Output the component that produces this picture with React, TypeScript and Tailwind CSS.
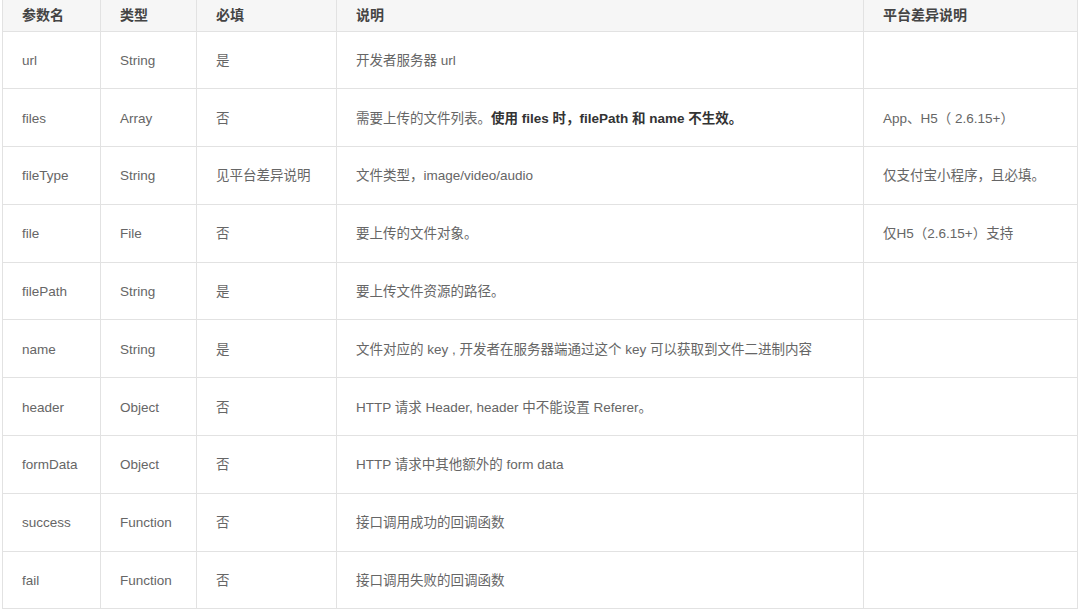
import React from "react";

type Row = {
  name: string;
  type: string;
  req: string;
  desc: React.ReactNode;
  plat?: string;
};

const rows: Row[] = [
  { name: "url", type: "String", req: "是", desc: "开发者服务器 url" },
  {
    name: "files",
    type: "Array",
    req: "否",
    desc: (
      <>
        需要上传的文件列表。
        <b className="font-bold text-[#333]">使用 files 时，filePath 和 name 不生效。</b>
      </>
    ),
    plat: "App、H5（ 2.6.15+）",
  },
  {
    name: "fileType",
    type: "String",
    req: "见平台差异说明",
    desc: "文件类型，image/video/audio",
    plat: "仅支付宝小程序，且必填。",
  },
  { name: "file", type: "File", req: "否", desc: "要上传的文件对象。", plat: "仅H5（2.6.15+）支持" },
  { name: "filePath", type: "String", req: "是", desc: "要上传文件资源的路径。" },
  {
    name: "name",
    type: "String",
    req: "是",
    desc: "文件对应的 key , 开发者在服务器端通过这个 key 可以获取到文件二进制内容",
  },
  { name: "header", type: "Object", req: "否", desc: "HTTP 请求 Header, header 中不能设置 Referer。" },
  { name: "formData", type: "Object", req: "否", desc: "HTTP 请求中其他额外的 form data" },
  { name: "success", type: "Function", req: "否", desc: "接口调用成功的回调函数" },
  { name: "fail", type: "Function", req: "否", desc: "接口调用失败的回调函数" },
];

export default function App() {
  return (
    <div
      className="w-[1080px] h-[611px] overflow-hidden bg-white pl-[2px]"
      style={{ fontFamily: '"Liberation Sans", "Noto Sans CJK SC", sans-serif' }}
    >
      <table className="table-fixed border-collapse w-[1075px] text-[13.5px] text-[#666]">
        <colgroup>
          <col className="w-[98px]" />
          <col className="w-[96px]" />
          <col className="w-[140px]" />
          <col className="w-[527px]" />
          <col className="w-[214px]" />
        </colgroup>
        <thead>
          <tr className="h-[31px] bg-[#f6f6f6] text-[#444] text-[14px] font-bold">
            <th className="border-x border-b border-[#e2e2e2] text-left font-bold pl-[19px]">参数名</th>
            <th className="border-x border-b border-[#e2e2e2] text-left font-bold pl-[19px]">类型</th>
            <th className="border-x border-b border-[#e2e2e2] text-left font-bold pl-[19px]">必填</th>
            <th className="border-x border-b border-[#e2e2e2] text-left font-bold pl-[19px]">说明</th>
            <th className="border-x border-b border-[#e2e2e2] text-left font-bold pl-[19px]">平台差异说明</th>
          </tr>
        </thead>
        <tbody>
          {rows.map((r) => (
            <tr key={r.name} className="h-[57.8px]">
              <td className="border border-[#e2e2e2] pl-[19px] pt-[2px] whitespace-nowrap">{r.name}</td>
              <td className="border border-[#e2e2e2] pl-[19px] pt-[2px] whitespace-nowrap">{r.type}</td>
              <td className="border border-[#e2e2e2] pl-[19px] pt-[2px] whitespace-nowrap">{r.req}</td>
              <td className="border border-[#e2e2e2] pl-[19px] pt-[2px] whitespace-nowrap">{r.desc}</td>
              <td className="border border-[#e2e2e2] pl-[19px] pt-[2px] whitespace-nowrap">{r.plat ?? ""}</td>
            </tr>
          ))}
        </tbody>
      </table>
    </div>
  );
}
